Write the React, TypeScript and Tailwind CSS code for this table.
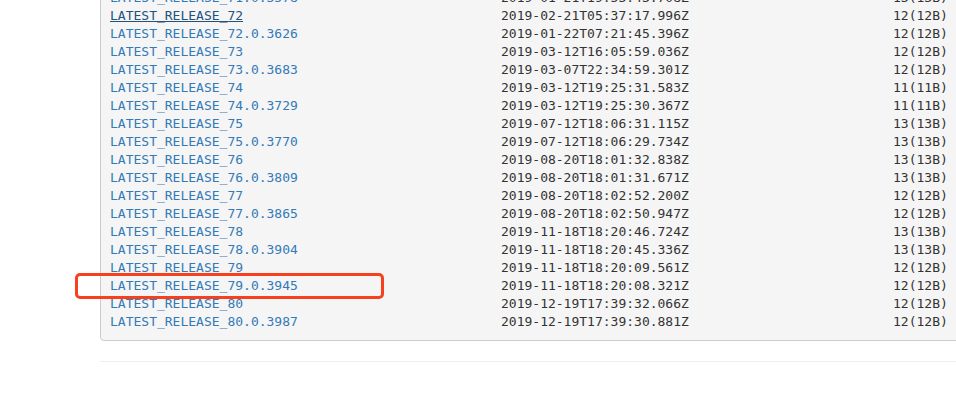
import React from "react";

type Row = { name: string; date: string; size: string };

const rows: Row[] = [
  { name: "LATEST_RELEASE_71.0.3578", date: "2019-01-21T19:53:43.708Z", size: "13(13B)" },
  { name: "LATEST_RELEASE_72", date: "2019-02-21T05:37:17.996Z", size: "12(12B)" },
  { name: "LATEST_RELEASE_72.0.3626", date: "2019-01-22T07:21:45.396Z", size: "12(12B)" },
  { name: "LATEST_RELEASE_73", date: "2019-03-12T16:05:59.036Z", size: "12(12B)" },
  { name: "LATEST_RELEASE_73.0.3683", date: "2019-03-07T22:34:59.301Z", size: "12(12B)" },
  { name: "LATEST_RELEASE_74", date: "2019-03-12T19:25:31.583Z", size: "11(11B)" },
  { name: "LATEST_RELEASE_74.0.3729", date: "2019-03-12T19:25:30.367Z", size: "11(11B)" },
  { name: "LATEST_RELEASE_75", date: "2019-07-12T18:06:31.115Z", size: "13(13B)" },
  { name: "LATEST_RELEASE_75.0.3770", date: "2019-07-12T18:06:29.734Z", size: "13(13B)" },
  { name: "LATEST_RELEASE_76", date: "2019-08-20T18:01:32.838Z", size: "13(13B)" },
  { name: "LATEST_RELEASE_76.0.3809", date: "2019-08-20T18:01:31.671Z", size: "13(13B)" },
  { name: "LATEST_RELEASE_77", date: "2019-08-20T18:02:52.200Z", size: "12(12B)" },
  { name: "LATEST_RELEASE_77.0.3865", date: "2019-08-20T18:02:50.947Z", size: "12(12B)" },
  { name: "LATEST_RELEASE_78", date: "2019-11-18T18:20:46.724Z", size: "13(13B)" },
  { name: "LATEST_RELEASE_78.0.3904", date: "2019-11-18T18:20:45.336Z", size: "13(13B)" },
  { name: "LATEST_RELEASE_79", date: "2019-11-18T18:20:09.561Z", size: "12(12B)" },
  { name: "LATEST_RELEASE_79.0.3945", date: "2019-11-18T18:20:08.321Z", size: "12(12B)" },
  { name: "LATEST_RELEASE_80", date: "2019-12-19T17:39:32.066Z", size: "12(12B)" },
  { name: "LATEST_RELEASE_80.0.3987", date: "2019-12-19T17:39:30.881Z", size: "12(12B)" },
];

const App: React.FC = () => {
  return (
    <div className="relative w-[956px] h-[396px] overflow-hidden bg-white pl-[100px]">
      <div
        className="w-[900px] mt-[-21px] pt-[9px] pb-[9px] pl-[9px] bg-[#f5f5f5] border border-[#ccc] rounded-[4px] text-[13px] leading-[18px] text-[#333]"
        style={{ fontFamily: '"DejaVu Sans Mono", monospace' }}
      >
        {rows.map((r) => (
          <div key={r.name} className="flex whitespace-pre">
            <span
              className={`w-[391px] ${
                r.name === "LATEST_RELEASE_72"
                  ? "text-[#23527c] underline"
                  : "text-[#337ab7]"
              }`}
            >
              {r.name}
            </span>
            <span className="w-[392px]">{r.date}</span>
            <span>{r.size}</span>
          </div>
        ))}
      </div>
      <div className="mt-[20px] border-t border-[#eee]" />
      <div className="absolute left-[75px] top-[273px] w-[309px] h-[26px] border-[3px] border-[#f8401f] rounded-[5px]" />
    </div>
  );
};

export default App;
